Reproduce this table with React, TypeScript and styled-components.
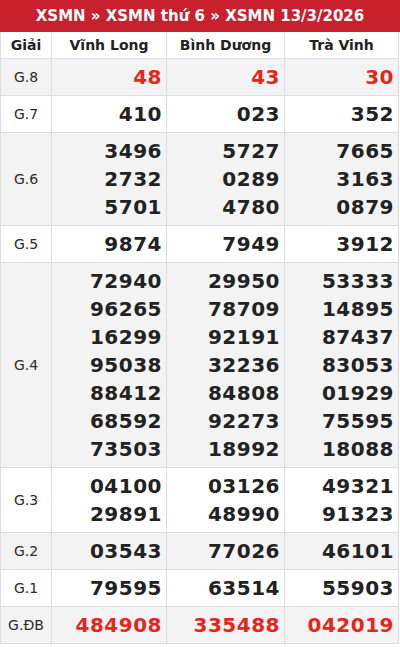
import React from "react";
import styled, { createGlobalStyle } from "styled-components";

const Global = createGlobalStyle`
  html, body { margin: 0; padding: 0; background: #fff; }
  body { font-family: "DejaVu Sans", sans-serif; }
`;

const Wrap = styled.div`
  width: 400px;
`;

const Title = styled.div`
  background: #c8202c;
  color: #fff;
  font-weight: bold;
  font-size: 15px;
  height: 32px;
  line-height: 32px;
  text-align: center;
`;

const Table = styled.table`
  width: 399px;
  border-collapse: collapse;
  table-layout: fixed;
  border: 1px solid #dcdce2;
  border-top: none;
`;

const Col = styled.col<{ $w: number }>`
  width: ${(p) => p.$w}px;
`;

const HeadCell = styled.th`
  font-size: 14px;
  font-weight: bold;
  color: #222;
  text-align: center;
  padding: 4px 2px;
  line-height: 18px;
  border: 1px solid #dcdce2;
  border-top: none;
`;

const Row = styled.tr<{ $alt: boolean }>`
  background: ${(p) => (p.$alt ? "#f3f3f3" : "#fff")};
`;

const Label = styled.td`
  font-size: 14px;
  color: #2a2a2a;
  text-align: center;
  border: 1px solid #dcdce2;
  padding: 4px 1px;
`;

const Nums = styled.td`
  border: 1px solid #dcdce2;
  padding: 4px 4px 4px 2px;
  text-align: right;
  vertical-align: middle;
`;

const Num = styled.div<{ $red?: boolean }>`
  font-size: 20px;
  font-weight: bold;
  line-height: 28px;
  letter-spacing: 0.5px;
  color: ${(p) => (p.$red ? "#e8251a" : "#222")};
`;

type Prize = { label: string; cols: string[][]; red?: boolean };

const prizes: Prize[] = [
  { label: "G.8", cols: [["48"], ["43"], ["30"]], red: true },
  { label: "G.7", cols: [["410"], ["023"], ["352"]] },
  {
    label: "G.6",
    cols: [
      ["3496", "2732", "5701"],
      ["5727", "0289", "4780"],
      ["7665", "3163", "0879"],
    ],
  },
  { label: "G.5", cols: [["9874"], ["7949"], ["3912"]] },
  {
    label: "G.4",
    cols: [
      ["72940", "96265", "16299", "95038", "88412", "68592", "73503"],
      ["29950", "78709", "92191", "32236", "84808", "92273", "18992"],
      ["53333", "14895", "87437", "83053", "01929", "75595", "18088"],
    ],
  },
  {
    label: "G.3",
    cols: [
      ["04100", "29891"],
      ["03126", "48990"],
      ["49321", "91323"],
    ],
  },
  { label: "G.2", cols: [["03543"], ["77026"], ["46101"]] },
  { label: "G.1", cols: [["79595"], ["63514"], ["55903"]] },
  { label: "G.ĐB", cols: [["484908"], ["335488"], ["042019"]], red: true },
];

export default function App() {
  return (
    <Wrap>
      <Global />
      <Title>XSMN » XSMN thứ 6 » XSMN 13/3/2026</Title>
      <Table>
        <colgroup>
          <Col $w={51} />
          <Col $w={115} />
          <Col $w={118} />
          <Col $w={114} />
        </colgroup>
        <thead>
          <tr>
            <HeadCell>Giải</HeadCell>
            <HeadCell>Vĩnh Long</HeadCell>
            <HeadCell>Bình Dương</HeadCell>
            <HeadCell>Trà Vinh</HeadCell>
          </tr>
        </thead>
        <tbody>
          {prizes.map((p, i) => (
            <Row key={p.label} $alt={i % 2 === 0}>
              <Label>{p.label}</Label>
              {p.cols.map((c, j) => (
                <Nums key={j}>
                  {c.map((n) => (
                    <Num key={n} $red={p.red}>
                      {n}
                    </Num>
                  ))}
                </Nums>
              ))}
            </Row>
          ))}
        </tbody>
      </Table>
    </Wrap>
  );
}
